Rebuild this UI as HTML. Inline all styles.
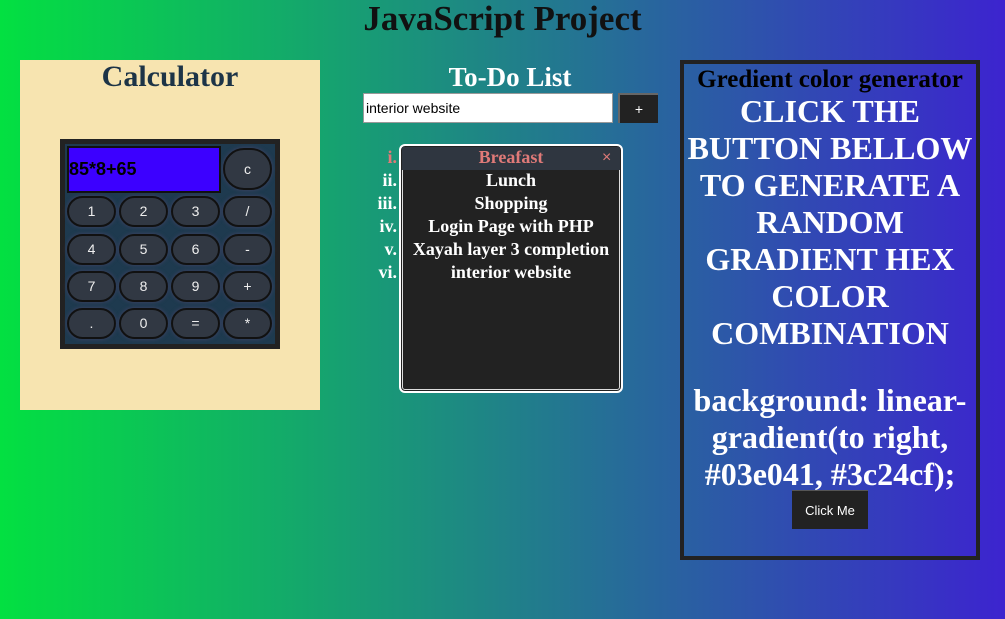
<!DOCTYPE html>
<html><head><meta charset="utf-8"><style>
*{margin:0;padding:0;box-sizing:border-box}
body{width:1005px;height:619px;overflow:hidden;background:linear-gradient(to right,#03e041,#3c24cf);font-family:"Liberation Serif","Times New Roman",serif;position:relative}
.a{position:absolute}
h1{position:absolute;left:0;width:1005px;top:0;text-align:center;font-size:35px;line-height:38px;color:#111}
.calc{left:20px;top:60px;width:300px;height:350px;background:#f7e4b0}
.calc h2{text-align:center;font-size:30px;color:#1d3447;line-height:34px;margin-top:0px}
.body{left:60px;top:139px;width:220px;height:210px;background:#1e3a4f;border:5px solid #222}
.disp{left:67px;top:146px;width:154px;height:47px;background:#3c00ff;border:2px solid #111;font:bold 18px "Liberation Sans",sans-serif;color:#000;line-height:43px;padding-left:0px}
.b{position:absolute;width:49px;height:31px;border-radius:16px;background:#313843;border:2px solid #111;color:#eee;font:14px "Liberation Sans",sans-serif;text-align:center;line-height:27px;box-shadow:0 0 4px #446}
.in{left:363px;top:93px;width:250px;height:30px;background:#fff;border:1px solid #999;font:14px "Liberation Sans",sans-serif;line-height:28px;padding-left:2px;color:#000}
.plus{left:618px;top:93px;width:40px;height:30px;background:#222;border-top:2px solid #666;border-left:2px solid #666;color:#fff;font:14px "Liberation Sans",sans-serif;text-align:center;line-height:28px}
.list{left:399px;top:144px;width:224px;height:249px;border:2px solid #fff;border-radius:6px;background:#222;box-shadow:inset 0 0 0 1px #222,inset 0 0 0 2px #ddd}
.it{position:absolute;left:402px;width:218px;text-align:center;color:#fff;font-weight:bold;font-size:18px;line-height:23px;white-space:nowrap}
.num{position:absolute;right:608px;color:#fff;font-weight:bold;font-size:18px;line-height:23px}
.gen{left:680px;top:60px;width:300px;height:500px;border:4px solid #222;text-align:center}
</style></head><body>
<h1>JavaScript Project</h1>
<div class="a calc"><h2>Calculator</h2></div>
<div class="a body"></div>
<div class="a disp">85*8+65</div>
<div class="b" style="left:223px;top:148px;height:42px;border-radius:21px;line-height:38px">c</div>
<div class="b" style="left:67px;top:196px">1</div><div class="b" style="left:119px;top:196px">2</div><div class="b" style="left:171px;top:196px">3</div><div class="b" style="left:223px;top:196px">/</div>
<div class="b" style="left:67px;top:234px">4</div><div class="b" style="left:119px;top:234px">5</div><div class="b" style="left:171px;top:234px">6</div><div class="b" style="left:223px;top:234px">-</div>
<div class="b" style="left:67px;top:271px">7</div><div class="b" style="left:119px;top:271px">8</div><div class="b" style="left:171px;top:271px">9</div><div class="b" style="left:223px;top:271px">+</div>
<div class="b" style="left:67px;top:308px">.</div><div class="b" style="left:119px;top:308px">0</div><div class="b" style="left:171px;top:308px">=</div><div class="b" style="left:223px;top:308px">*</div>

<div class="a" style="left:360px;top:62px;width:300px;text-align:center;color:#fff;font-weight:bold;font-size:27px;line-height:30px">To-Do List</div>
<div class="a in">interior website</div>
<div class="a plus">+</div>
<div class="a list"></div>
<div class="a" style="left:402px;top:147px;width:218px;height:23px;background:#2f3640"></div>
<div class="it" style="top:146px;color:#e07a78">Breafast</div>
<div class="a" style="left:602px;top:146px;color:#e07a78;font:16px 'Liberation Sans',sans-serif;line-height:23px">×</div>
<div class="num" style="top:146px;color:#e07a78">i.</div>
<div class="it" style="top:169px">Lunch</div><div class="num" style="top:169px">ii.</div>
<div class="it" style="top:192px">Shopping</div><div class="num" style="top:192px">iii.</div>
<div class="it" style="top:215px">Login Page with PHP</div><div class="num" style="top:215px">iv.</div>
<div class="it" style="top:238px">Xayah layer 3 completion</div><div class="num" style="top:238px">v.</div>
<div class="it" style="top:261px">interior website</div><div class="num" style="top:261px">vi.</div>

<div class="a gen">
<div style="font-weight:bold;font-size:25px;line-height:28px;color:#000;margin-top:2px;white-space:nowrap">Gredient color generator</div>
<div style="font-weight:bold;font-size:32px;line-height:37px;color:#fff;margin-top:-1px">CLICK THE BUTTON BELLOW TO GENERATE A RANDOM GRADIENT HEX COLOR COMBINATION</div>
<div style="font-weight:bold;font-size:32px;line-height:37px;color:#fff;margin-top:30px">background: linear-gradient(to right, #03e041, #3c24cf);</div>
<div style="display:inline-block;margin-top:-3px;width:76px;height:39px;background:#222;color:#fff;font:13px 'Liberation Sans',sans-serif;line-height:39px;border-top:1px solid #555">Click Me</div>
</div>
</body></html>
